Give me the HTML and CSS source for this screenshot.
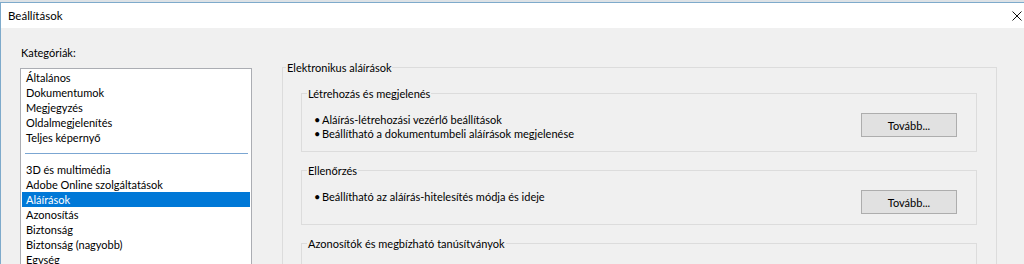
FILE: index.html
```html
<!DOCTYPE html>
<html lang="hu">
<head>
    <meta charset="UTF-8">
    <title>Beállítások</title>
    <link rel="stylesheet" href="styles.css">
</head>
<body>
<div class="desk"></div>
<div class="window">
    <div class="titlebar">
        <span class="title">Beállítások</span>
        <svg class="close" width="10" height="10" viewBox="0 0 10 10">
            <path d="M0.5 0.5 L9.5 9.5 M9.5 0.5 L0.5 9.5" stroke="#111" stroke-width="1" fill="none"/>
        </svg>
    </div>
    <div class="content">
        <div class="left">
            <div class="label">Kategóriák:</div>
            <ul class="list">
                <li>Általános</li>
                <li>Dokumentumok</li>
                <li>Megjegyzés</li>
                <li>Oldalmegjelenítés</li>
                <li>Teljes képernyő</li>
                <li class="sep"></li>
                <li>3D és multimédia</li>
                <li>Adobe Online szolgáltatások</li>
                <li class="selected">Aláírások</li>
                <li>Azonosítás</li>
                <li>Biztonság</li>
                <li>Biztonság (nagyobb)</li>
                <li>Egység</li>
            </ul>
        </div>
        <div class="right">
            <fieldset class="group outer">
                <legend>Elektronikus aláírások</legend>

                <fieldset class="group">
                    <legend>Létrehozás és megjelenés</legend>
                    <div class="row">
                        <ul class="bullets">
                            <li>Aláírás-létrehozási vezérlő beállítások</li>
                            <li>Beállítható a dokumentumbeli aláírások megjelenése</li>
                        </ul>
                        <button class="btn">Tovább...</button>
                    </div>
                </fieldset>

                <fieldset class="group">
                    <legend>Ellenőrzés</legend>
                    <div class="row">
                        <ul class="bullets">
                            <li>Beállítható az aláírás-hitelesítés módja és ideje</li>
                        </ul>
                        <button class="btn">Tovább...</button>
                    </div>
                </fieldset>

                <fieldset class="group last">
                    <legend>Azonosítók és megbízható tanúsítványok</legend>
                </fieldset>
            </fieldset>
        </div>
    </div>
</div>
</body>
</html>
```

FILE: styles.css
```css
* {
    margin: 0;
    padding: 0;
    box-sizing: border-box;
}

body {
    width: 1024px;
    height: 264px;
    overflow: hidden;
    background: #f0f0f0;
    font-family: Lato, "Noto Sans", sans-serif;
    font-size: 11px;
    color: #000;
}

.desk {
    height: 2px;
    background: #dde2e6;
}

.window {
    border-top: 1px solid #7eaacb;
    border-left: 1px solid #7eaacb;
}

.titlebar {
    height: 25px;
    background: #fff;
    display: flex;
    align-items: center;
    justify-content: space-between;
    padding: 0 2px 0 7px;
    font-size: 11.5px;
}

.close {
    display: block;
}

.content {
    display: flex;
    background: #f0f0f0;
    height: 240px;
}

.left {
    width: 250px;
    padding: 17px 0 0 19px;
    flex-shrink: 0;
}

.label {
    line-height: 15px;
    padding-left: 1px;
    margin-bottom: 8px;
}

.list {
    list-style: none;
    width: 232px;
    height: 200px;
    background: #fff;
    border: 1px solid #abadb3;
    padding-top: 1px;
    line-height: 15px;
}

.list li {
    padding-left: 4px;
    margin: 0 1px;
    white-space: nowrap;
}

.list .sep {
    height: 17px;
    margin: 0 3px 0 4px;
    padding: 0;
    background: linear-gradient(#7ba6d2, #7ba6d2) 0 8px / 100% 1px no-repeat;
}

.list .selected {
    background: #0078d7;
    color: #fff;
}

.right {
    flex: 1;
    padding: 32px 27px 0 31px;
}

.group {
    border: 1px solid #dcdcdc;
    padding: 0;
    min-width: 0;
}

.group legend {
    line-height: 15px;
    padding: 0 1px;
}

.outer {
    padding-top: 11px;
    height: 300px;
}

.outer > legend {
    margin-left: 3px;
}

.group .group {
    margin: 0 19px 11px 18px;
}

.group .group legend {
    margin-left: 5px;
}

.group .last {
    height: 60px;
}

.row {
    display: flex;
    align-items: flex-start;
    justify-content: space-between;
    min-height: 26px;
    padding: 12px 19px 10px 12px;
}

.bullets {
    list-style: none;
    line-height: 14px;
}

.bullets li::before {
    content: "\2022";
    display: inline-block;
    width: 8px;
}

.btn {
    width: 96px;
    height: 24px;
    background: #e1e1e1;
    border: 1px solid #adadad;
    font-family: inherit;
    font-size: 11px;
    color: #000;
}
```
